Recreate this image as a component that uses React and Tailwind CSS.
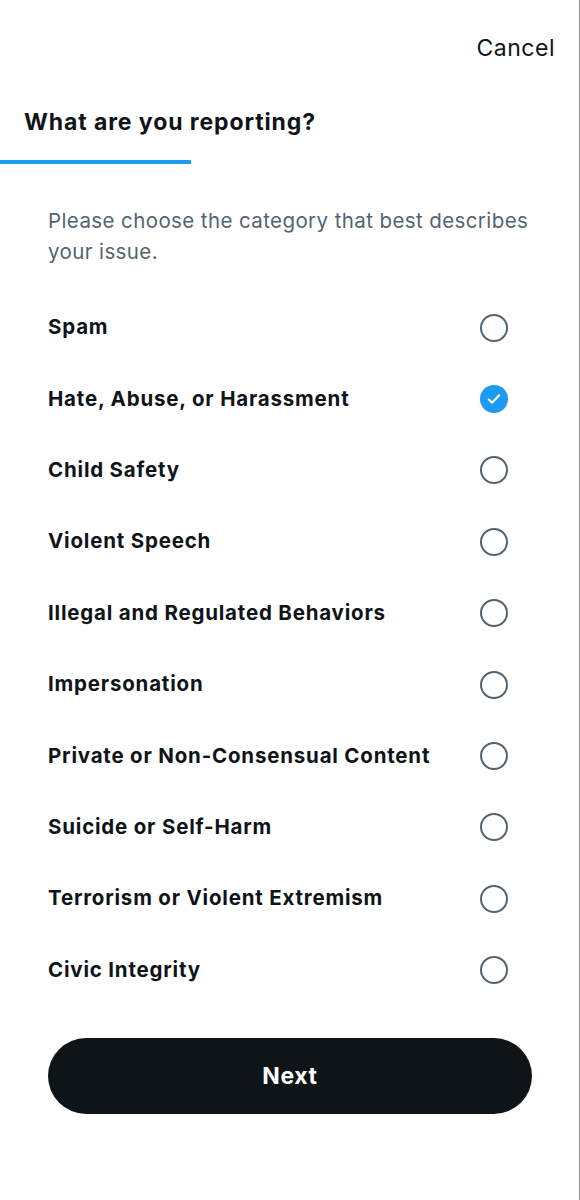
import React, { useState } from "react";

const categories = [
  "Spam",
  "Hate, Abuse, or Harassment",
  "Child Safety",
  "Violent Speech",
  "Illegal and Regulated Behaviors",
  "Impersonation",
  "Private or Non-Consensual Content",
  "Suicide or Self-Harm",
  "Terrorism or Violent Extremism",
  "Civic Integrity",
];

function Radio({ checked }) {
  if (checked) {
    return (
      <div className="w-[28px] h-[28px] rounded-full bg-[#1d9bf0] flex items-center justify-center">
        <svg width="18" height="18" viewBox="0 0 16 16" fill="none">
          <path
            d="M3.4 8.4l2.9 2.9 6.3-6.6"
            stroke="white"
            strokeWidth="1.8"
            strokeLinecap="round"
            strokeLinejoin="round"
          />
        </svg>
      </div>
    );
  }
  return (
    <div className="w-[28px] h-[28px] rounded-full border-[2.5px] border-[#536471]" />
  );
}

export default function App() {
  const [selected, setSelected] = useState(1);

  return (
    <div
      className="w-[580px] h-[1200px] bg-white border-r border-[#9a9a9a] text-[#0f1419]"
      style={{ fontFamily: "Inter, 'Liberation Sans', sans-serif" }}
    >
      {/* Top bar */}
      <div className="h-[96px] flex items-center justify-end pr-[24px]">
        <span className="text-[23px] font-normal tracking-[0.5px]">Cancel</span>
      </div>

      {/* Title + tab indicator */}
      <div className="h-[52px] flex items-center pl-[24px]">
        <h1 className="text-[23px] font-bold tracking-[0.9px]">What are you reporting?</h1>
      </div>
      <div className="mt-[12px] h-[4px] w-[191px] bg-[#1d9bf0]" />

      {/* Description */}
      <p className="mt-[41px] px-[48px] text-[20.5px] leading-[31px] text-[#536471] tracking-[0.4px]">
        <span className="whitespace-nowrap">Please choose the category that best describes</span>
        <br />
        your issue.
      </p>

      {/* Options */}
      <div className="mt-[25px]">
        {categories.map((c, i) => (
          <div
            key={c}
            className="h-[71.4px] flex items-center justify-between pl-[48px] pr-[71px] cursor-pointer"
            onClick={() => setSelected(i)}
          >
            <span className="text-[20.5px] font-bold tracking-[0.8px]">{c}</span>
            <Radio checked={selected === i} />
          </div>
        ))}
      </div>

      {/* Next button */}
      <div className="mt-[32px] px-[48px]">
        <button className="w-[484px] h-[76px] rounded-full bg-[#0f1419] text-white text-[23px] font-bold tracking-[0.6px]">
          Next
        </button>
      </div>
    </div>
  );
}
